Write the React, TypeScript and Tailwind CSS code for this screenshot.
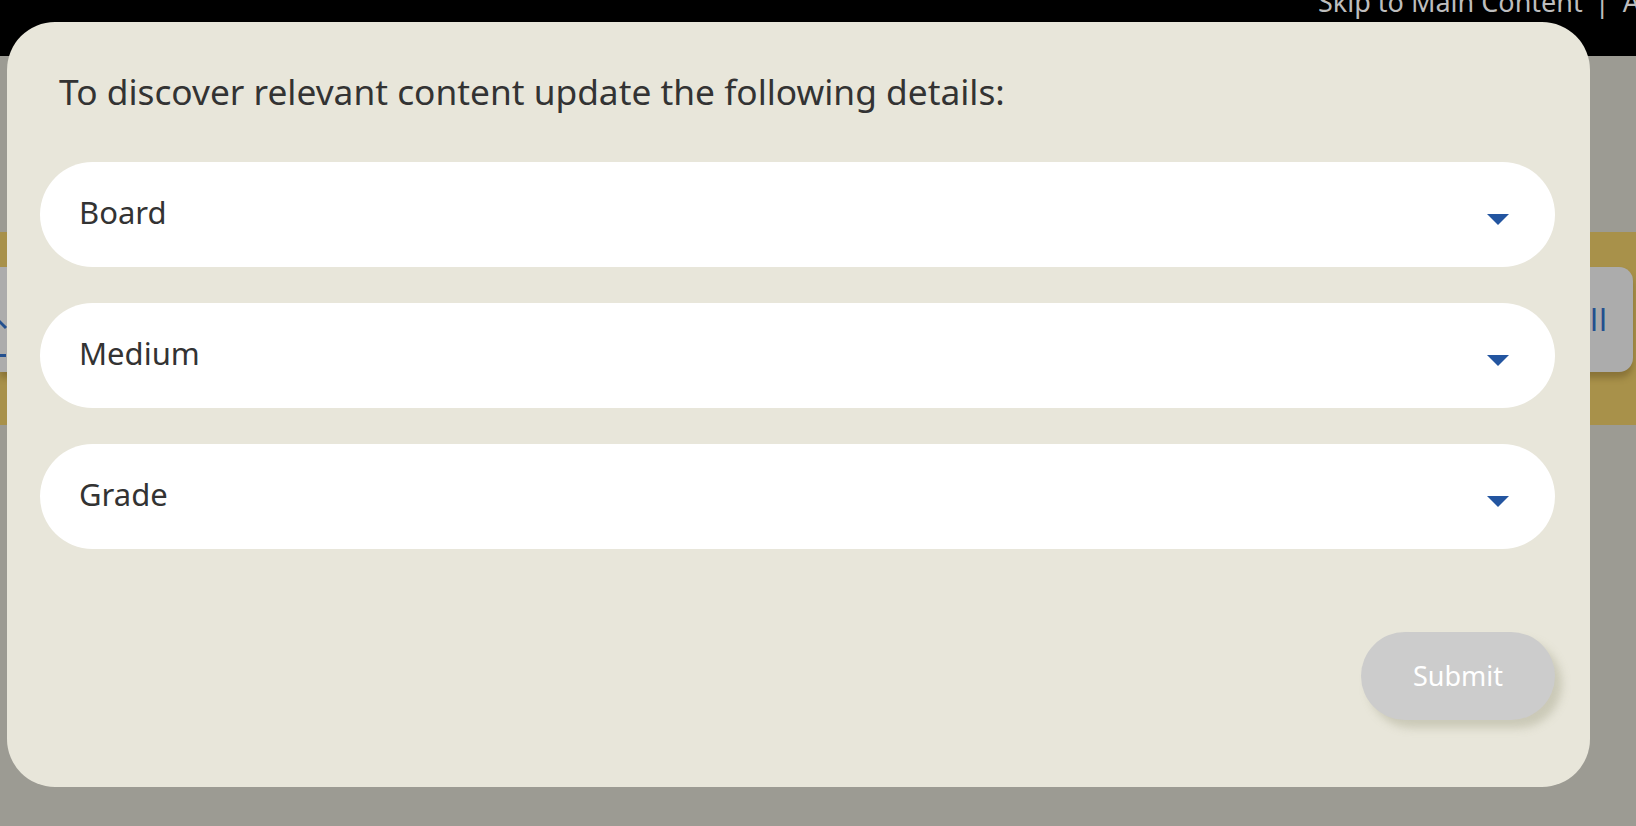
import { ReactNode } from 'react';

const fields = ['Board', 'Medium', 'Grade'];

const Caret = () => (
  <svg width="22" height="11" viewBox="0 0 22 11" className="mt-[10px] shrink-0">
    <polygon points="0,0 22,0 11,11" fill="#2355a0" />
  </svg>
);

const SelectField = ({ children }: { children: ReactNode }) => (
  <div className="h-[105px] rounded-full bg-white flex items-center justify-between pl-[39px] pr-[46px]">
    <span className="text-[31px] text-[#333333] pb-[5px]">{children}</span>
    <Caret />
  </div>
);

export default function App() {
  return (
    <div className="relative w-full h-[826px] overflow-hidden bg-[#9c9b93] font-['Noto_Sans','Open_Sans',sans-serif]">
      {/* page behind the dialog */}
      <header className="h-[56px] bg-black overflow-hidden">
        <div className="pl-[1318px] -mt-[18px] whitespace-nowrap text-[27px] leading-[40px] text-[#bdbdbd]">
          Skip to Main Content<span className="ml-[12px] mr-[6px]">|</span> Accessibility
        </div>
      </header>
      <div className="mt-[176px] bg-[#a8914a] py-[35px] pb-[53px]">
        <div className="h-[105px] bg-[#acacac] rounded-r-[14px] mr-[3px] flex items-center justify-between pr-[25px] shadow-[0_6px_6px_rgba(80,60,20,0.35)]">
          <svg width="10" height="80" viewBox="0 0 10 80" className="shrink-0">
            <path d="M-4 38 L6 48" stroke="#23508f" strokeWidth="3" fill="none" />
            <rect x="0" y="74" width="6" height="3" fill="#23508f" />
          </svg>
          <span className="text-[31px] text-[#23508f] tracking-[1px]">All</span>
        </div>
      </div>

      {/* dialog */}
      <div className="absolute left-[7px] top-[22px] w-[1583px] h-[765px] rounded-[48px] bg-[#e8e6da] pl-[33px] pr-[35px] pt-[45px]">
        <h2 className="pl-[19px] text-[35.3px] leading-[48px] text-[#333333]">
          To discover relevant content update the following details:
        </h2>
        <div className="mt-[47px] flex flex-col gap-[36px]">
          {fields.map((f) => (
            <SelectField key={f}>{f}</SelectField>
          ))}
        </div>
        <div className="mt-[83px] flex justify-end">
          <button
            type="button"
            className="w-[194px] h-[88px] rounded-full bg-[#cccccc] text-white text-[27px] shadow-[7px_8px_8px_rgba(150,148,120,0.35)]"
          >
            Submit
          </button>
        </div>
      </div>
    </div>
  );
}
